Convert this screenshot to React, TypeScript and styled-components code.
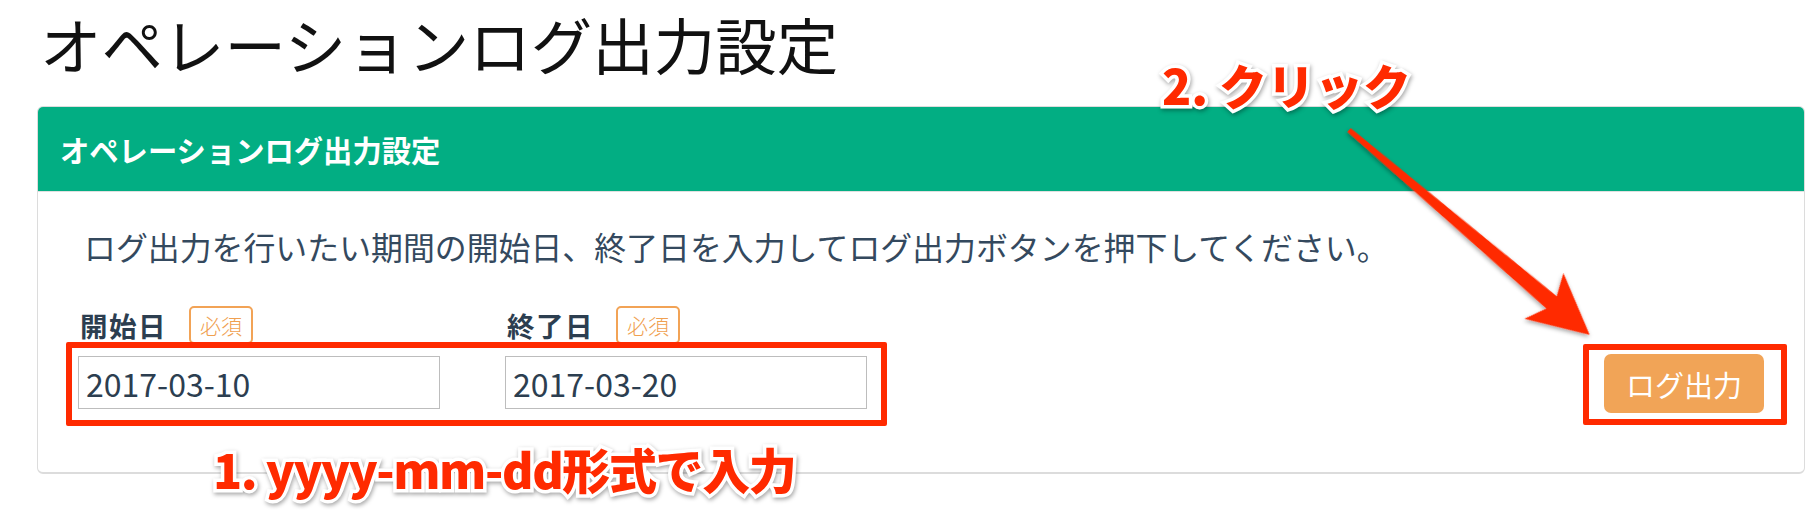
import React from "react";
import styled, {createGlobalStyle} from "styled-components";

const GlobalStyle = createGlobalStyle`
	html, body {
		margin: 0;
		padding: 0;
		background: #fff;
	}
	body {
		font-family: "Noto Sans CJK JP", "Noto Sans", sans-serif;
		color: #34495e;
	}
`;

const Page = styled.div`
	position: relative;
	width: 1820px;
	height: 510px;
	box-sizing: border-box;
	padding: 0 15px 0 37px;
	overflow: hidden;
`;

const Title = styled.h1`
	margin: 0;
	padding: 4px 0 0 3px;
	height: 106px;
	box-sizing: border-box;
	font-size: 61.5px;
	font-weight: 400;
	line-height: 80px;
	color: #111;
`;

const Panel = styled.section`
	position: relative;
	border: 1px solid #dcdcdc;
	border-bottom-width: 2px;
	border-radius: 6px;
	overflow: hidden;
`;

const PanelHeader = styled.header`
	height: 84px;
	display: flex;
	align-items: center;
	padding-left: 22px;
	background: #02ae83;
	border-bottom: 1px solid #e0e0e0;
	color: #fff;
	font-size: 29.3px;
	font-weight: 700;
`;

const PanelBody = styled.div`
	padding: 32px 40px 63px;
`;

const Lead = styled.p`
	margin: 0 0 38px 6px;
	font-size: 31.9px;
	line-height: 44px;
	color: #34495e;
`;

const FormRow = styled.div`
	display: flex;
	align-items: flex-end;
	justify-content: space-between;
`;

const Fields = styled.div`
	display: grid;
	grid-template-columns: 362px 362px;
	column-gap: 65px;
`;

const Field = styled.div`
	display: flex;
	flex-direction: column;
	gap: 12px;
`;

const LabelLine = styled.div`
	display: flex;
	align-items: center;
	gap: 22px;
	padding-left: 2px;
	height: 38px;
`;

const Label = styled.label`
	font-size: 27.5px;
	font-weight: 700;
	letter-spacing: 1.5px;
	color: #2c3e50;
`;

const Badge = styled.span`
	display: inline-flex;
	align-items: center;
	justify-content: center;
	width: 64px;
	height: 38px;
	box-sizing: border-box;
	border: 2px solid #f2a356;
	border-radius: 5px;
	color: #f0a050;
	font-size: 21px;
	font-weight: 300;
`;

const DateInput = styled.input`
	width: 362px;
	height: 53px;
	box-sizing: border-box;
	border: 1px solid #bdbdbd;
	padding: 0 7px;
	font-family: "Noto Sans CJK JP", sans-serif;
	font-size: 32px;
	color: #2c3e50;
	outline: none;
`;

const OutputButton = styled.button`
	width: 160px;
	height: 59px;
	margin-bottom: -4px;
	border: none;
	border-radius: 7px;
	background: #f1a457;
	color: #fff;
	font-family: "Noto Sans CJK JP", sans-serif;
	font-size: 29px;
	cursor: pointer;
`;

const Marker = styled.div<{left: number; top: number; w: number; h: number}>`
	position: absolute;
	left: ${p => p.left}px;
	top: ${p => p.top}px;
	width: ${p => p.w}px;
	height: ${p => p.h}px;
	box-sizing: border-box;
	border: 6px solid #ff2a00;
	border-radius: 2px;
	pointer-events: none;
`;

const Note = styled.div<{left: number; top: number; tight?: boolean}>`
	position: absolute;
	left: ${p => p.left}px;
	top: ${p => p.top}px;
	font-family: "Noto Sans CJK JP", sans-serif;
	font-weight: 900;
	font-size: 48px;
	line-height: 1;
	letter-spacing: ${p => (p.tight ? "-1.4px" : "0")};
	color: #ff2a00;
	-webkit-text-stroke: 7px #fff;
	paint-order: stroke fill;
	filter: drop-shadow(1px 2px 2px rgba(0, 0, 0, 0.35));
	white-space: nowrap;
	pointer-events: none;
`;

const ArrowLayer = styled.svg`
	position: absolute;
	left: 0;
	top: 0;
	pointer-events: none;
`;

export default function App() {
	return (
		<Page>
			<GlobalStyle />
			<Title>オペレーションログ出力設定</Title>
			<Panel>
				<PanelHeader>オペレーションログ出力設定</PanelHeader>
				<PanelBody>
					<Lead>ログ出力を行いたい期間の開始日、終了日を入力してログ出力ボタンを押下してください。</Lead>
					<FormRow>
						<Fields>
							<Field>
								<LabelLine>
									<Label>開始日</Label>
									<Badge>必須</Badge>
								</LabelLine>
								<DateInput defaultValue="2017-03-10" />
							</Field>
							<Field>
								<LabelLine>
									<Label>終了日</Label>
									<Badge>必須</Badge>
								</LabelLine>
								<DateInput defaultValue="2017-03-20" />
							</Field>
						</Fields>
						<OutputButton>ログ出力</OutputButton>
					</FormRow>
				</PanelBody>
				<Marker left={28} top={235} w={821} h={84} />
				<Marker left={1545} top={237} w={204} h={81} />
			</Panel>

			<ArrowLayer width={1820} height={510}>
				<defs>
					<filter id="arrowShadow" x="-20%" y="-20%" width="140%" height="140%">
						<feDropShadow dx="1" dy="2" stdDeviation="2" floodColor="#000" floodOpacity="0.35" />
					</filter>
				</defs>
				<g transform="translate(1349 130) rotate(40.4)" filter="url(#arrowShadow)">
					<polygon points="0,-2.5 0,2.5 266,8 256,30 316,0 256,-30 266,-8" fill="#ff2a00" />
				</g>
			</ArrowLayer>

			<Note left={1162} top={60}>2. クリック</Note>
			<Note left={213} top={444} tight>1. yyyy-mm-dd形式で入力</Note>
		</Page>
	);
}
